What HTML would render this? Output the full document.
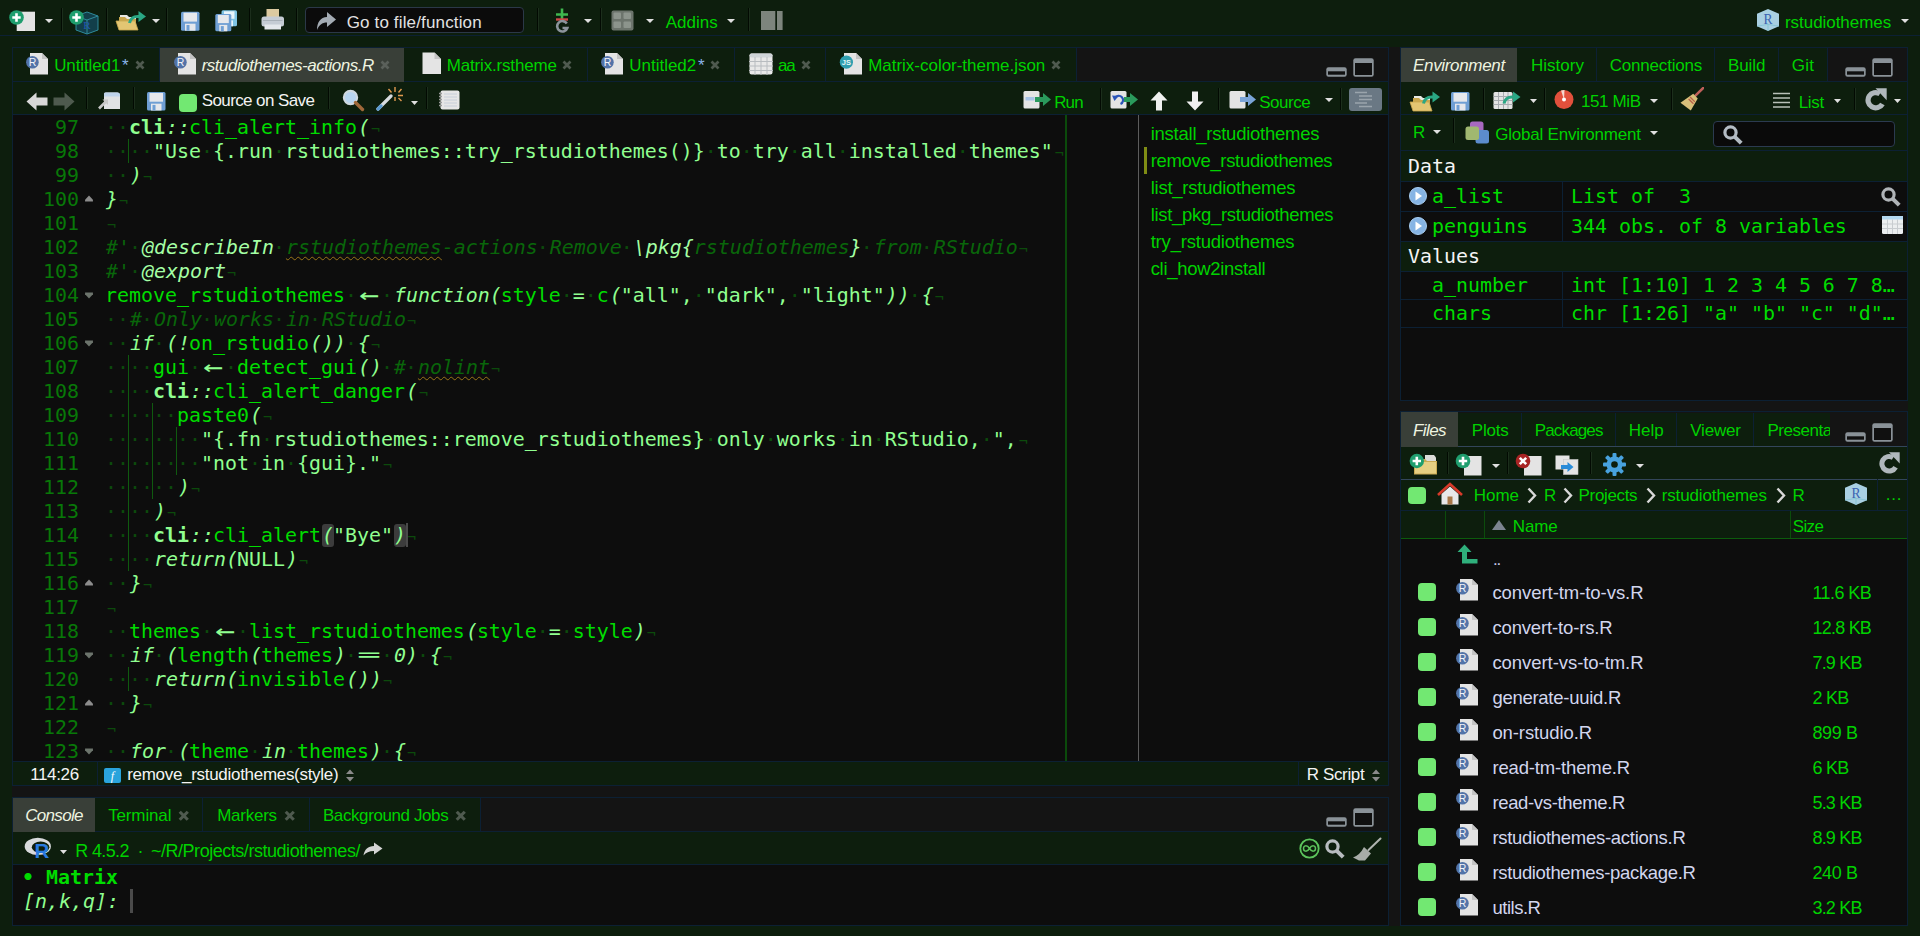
<!DOCTYPE html>
<html lang="en"><head><meta charset="utf-8"><title>RStudio</title>
<style>
html,body{margin:0;padding:0}
body{width:1920px;height:936px;background:#0d1e0d;overflow:hidden;position:relative;font-family:"Liberation Sans",sans-serif}
#r>div,#r>span,#r>svg,#code>*,.ab>*{position:absolute}
#r{position:absolute;left:0;top:0;width:1920px;height:936px;overflow:hidden}
#r div,#r span,#r svg{position:absolute}
.u{font-family:"Liberation Sans",sans-serif;line-height:20px;white-space:pre}
.cl,.ln{font-family:"DejaVu Sans Mono","Liberation Mono",monospace;font-size:19.93px;line-height:24px;height:24px;white-space:pre}
.cl{left:92px;padding-top:1px}
.ln{padding-top:1px}
.cl .e{font-size:15px;display:inline-block;width:12px;position:static;line-height:20px;vertical-align:top;margin-top:3px;position:relative;left:2px;top:1px}
.ln{left:0;width:66px;text-align:right;color:#087808}
.cl b,.cl i{font-weight:normal;font-style:normal}
.cl .w{color:#0c4a0c}
.cl .id{color:#00dc00}
.cl .k{color:#90ff90;font-style:italic;position:relative;left:1px}
.cl .s{color:#90ff90}
.cl .c{color:#09660a;font-style:italic;position:relative;left:1px}
.cl .t{color:#a4ffa4;font-style:italic;position:relative;left:1px}
.cl .n{color:#90ff90;font-weight:bold}
.cl .lig{display:inline-block;width:24px;height:24px;line-height:22px;vertical-align:top;text-align:center;position:static;font-size:24px;transform:scaleX(1.38)}
.cl .lig2{display:inline-block;width:24px;text-align:center;position:static;transform:scaleX(0.84)}
.cl .sq{text-decoration:underline wavy #9a7418 1px;text-underline-offset:2px}
.cl .hl{background:#3c3c3c;border-radius:3px}
</style></head>
<body><div id="r">
<div style="left:0px;top:35px;width:1920px;height:1px;background:#0c2034;"></div>
<svg style="left:8px;top:9px;" width="30" height="24" viewBox="0 0 30 24"><rect x="8.7" y="2.7" width="18.3" height="19.3" fill="#e4e4e4"/><circle cx="8.5" cy="8.5" r="7.3" fill="#1f9e6e"/><path d="M4.3 8.5H12.7M8.5 4.3V12.7" stroke="#fff" stroke-width="2.6"/></svg>
<svg style="left:45px;top:19px;" width="8" height="4" viewBox="0 0 8 4"><path d="M0 0H8L4.0 4Z" fill="#e0e0e0"/></svg>
<div style="left:61px;top:8px;width:1px;height:23px;background:#020a02;box-shadow:1px 0 0 #1c2e1c"></div>
<svg style="left:68px;top:9px;" width="32" height="26" viewBox="0 0 32 26"><path d="M19 3L30 7V21L19 25L8 21V7Z" fill="#123f4a" stroke="#2f8a9a" stroke-width="1"/><path d="M8 7L19 11L30 7M19 11V25" stroke="#2f8a9a" stroke-width="1" fill="none"/><text x="19" y="20" font-size="11" fill="#2458b0" text-anchor="middle" font-family="Liberation Serif, serif">R</text><circle cx="8.5" cy="8.5" r="7.3" fill="#1f9e6e"/><path d="M4.3 8.5H12.7M8.5 4.3V12.7" stroke="#fff" stroke-width="2.6"/></svg>
<div style="left:106px;top:8px;width:1px;height:23px;background:#020a02;box-shadow:1px 0 0 #1c2e1c"></div>
<svg style="left:114px;top:9px;" width="34" height="24" viewBox="0 0 34 24"><path d="M6 6h7l2 2h7v11h-16z" fill="#e9e9e4"/><path d="M5 8h6l2 2h9v10h-17z" fill="#c9a74e"/><path d="M2 12h19l3 9h-19z" fill="#e3c673" stroke="#c9a74e" stroke-width="0.8"/><path d="M15.5 14c1-5 5-7 10-6.5" fill="none" stroke="#2aa784" stroke-width="3"/><path d="M24.5 2l7.5 5.5l-7.5 5.5z" fill="#2aa784"/></svg>
<svg style="left:152px;top:19px;" width="8" height="4" viewBox="0 0 8 4"><path d="M0 0H8L4.0 4Z" fill="#e0e0e0"/></svg>
<div style="left:166px;top:8px;width:1px;height:23px;background:#020a02;box-shadow:1px 0 0 #1c2e1c"></div>
<svg style="left:180px;top:10px;" width="22" height="22" viewBox="0 0 22 22"><rect x="1" y="1.7" width="18.5" height="19" rx="1.5" fill="#6f9fd4"/><rect x="3.5" y="2.7" width="13.5" height="8.9" fill="#e6e8ec"/><rect x="5" y="13.7" width="10.5" height="7.0" fill="#e6e8ec"/><rect x="6.5" y="15.0" width="3" height="5.7" fill="#6f9fd4"/></svg>
<svg style="left:214px;top:9px;" width="26" height="24" viewBox="0 0 26 24"><rect x="7.5" y="1.3" width="15.5" height="16" rx="1.5" fill="#7fc4e4"/><rect x="10.0" y="2.3" width="10.5" height="7.5" fill="#e8f4fa"/><rect x="11.5" y="11.4" width="7.5" height="5.9" fill="#e8f4fa"/><rect x="13.0" y="12.5" width="3" height="4.8" fill="#7fc4e4"/><rect x="1.3" y="5" width="16" height="17.3" rx="1.5" fill="#6f9fd4"/><rect x="3.8" y="6" width="11" height="8.1" fill="#e6e8ec"/><rect x="5.3" y="15.9" width="8" height="6.4" fill="#e6e8ec"/><rect x="6.8" y="17.1" width="3" height="5.2" fill="#6f9fd4"/></svg>
<div style="left:249px;top:8px;width:1px;height:23px;background:#020a02;box-shadow:1px 0 0 #1c2e1c"></div>
<svg style="left:260px;top:8px;" width="26" height="23" viewBox="0 0 26 23"><rect x="6.5" y="1" width="12.5" height="10" fill="#dccaa0"/><rect x="1.5" y="8.5" width="22.5" height="10" rx="2.5" fill="#c5ccd4"/><rect x="4.5" y="16.5" width="16.5" height="5" fill="#e4e8ec"/><path d="M3 12.5H22.5" stroke="#a8b0b8" stroke-width="1"/></svg>
<div style="left:296px;top:8px;width:1px;height:23px;background:#020a02;box-shadow:1px 0 0 #1c2e1c"></div>
<div style="left:305px;top:7px;width:217px;height:24px;background:#0b0b0b;border:1px solid #2b3848;border-radius:4px"></div>
<svg style="left:316px;top:11px;" width="21" height="20" viewBox="0 0 21 20"><path d="M11 1L20 8.5L11 16V11.5C6 11.5 3 14 1 19C1 11 4.5 6.5 11 6Z" fill="#a4acb4"/></svg>
<span id="t1" class="u" style="left:346.7px;top:13.0px;color:#e2e2e2;font-size:17px;letter-spacing:0.147px;">Go to file/function</span>
<div style="left:537px;top:8px;width:1px;height:23px;background:#020a02;box-shadow:1px 0 0 #1c2e1c"></div>
<svg style="left:555px;top:8px;" width="14" height="25" viewBox="0 0 14 25"><path d="M1 6.5H13M7 0.5V12.5" stroke="#3fb84f" stroke-width="2.6"/><path d="M1 11.5H13" stroke="#d04848" stroke-width="2.4"/><path d="M11.8 15.5A5.2 5.2 0 1 0 12.3 20H7.5" stroke="#8c949c" stroke-width="2.6" fill="none"/></svg>
<svg style="left:584px;top:19px;" width="8" height="4" viewBox="0 0 8 4"><path d="M0 0H8L4.0 4Z" fill="#e0e0e0"/></svg>
<div style="left:600px;top:8px;width:1px;height:23px;background:#020a02;box-shadow:1px 0 0 #1c2e1c"></div>
<svg style="left:611px;top:10px;" width="23" height="21" viewBox="0 0 23 21"><rect x="0.5" y="0.5" width="22" height="20" rx="2" fill="#6c746c"/><rect x="2.5" y="2.5" width="7.5" height="6.5" rx="1" fill="#8c948c"/><rect x="12.5" y="2.5" width="7.5" height="6.5" rx="1" fill="#8c948c"/><rect x="2.5" y="11.5" width="7.5" height="6.5" rx="1" fill="#8c948c"/><rect x="12.5" y="11.5" width="7.5" height="6.5" rx="1" fill="#8c948c"/></svg>
<svg style="left:646px;top:19px;" width="8" height="4" viewBox="0 0 8 4"><path d="M0 0H8L4.0 4Z" fill="#e0e0e0"/></svg>
<span id="t2" class="u" style="left:665.7px;top:13.0px;color:#00d200;font-size:17px;letter-spacing:0.019px;">Addins</span>
<svg style="left:727px;top:19px;" width="8" height="4" viewBox="0 0 8 4"><path d="M0 0H8L4.0 4Z" fill="#e0e0e0"/></svg>
<div style="left:748px;top:8px;width:1px;height:23px;background:#020a02;box-shadow:1px 0 0 #1c2e1c"></div>
<svg style="left:761px;top:11px;" width="22" height="19" viewBox="0 0 22 19"><rect x="0" y="0" width="14.3" height="19" fill="#7d857d"/><rect x="16" y="0" width="5.6" height="19" fill="#7d857d"/></svg>
<svg style="left:1757px;top:9px;" width="22" height="22" viewBox="0 0 22 22"><path d="M11.0 0L22 4.84V17.16L11.0 22L0 17.16V4.84Z" fill="#a9d0e2"/><path d="M11.0 22V15.399999999999999M0 17.16L11.0 15.399999999999999L22 17.16" stroke="#7fc0d0" stroke-width="0.8" fill="none"/><text x="11.0" y="14.520000000000001" font-size="13.6" fill="#3a62b0" text-anchor="middle" font-family="Liberation Serif, serif">R</text></svg>
<span id="t3" class="u" style="left:1785.0px;top:13.0px;color:#00d200;font-size:17px;letter-spacing:-0.052px;">rstudiothemes</span>
<svg style="left:1901px;top:19px;" width="8" height="4" viewBox="0 0 8 4"><path d="M0 0H8L4.0 4Z" fill="#e0e0e0"/></svg>
<div style="left:12px;top:47px;width:1377px;height:739px;background:#0c2034;"></div>
<div style="left:13px;top:48px;width:1375px;height:33px;background:#141414;"></div>
<div style="left:13px;top:81px;width:1375px;height:1px;background:#0c2034;"></div>
<div style="left:13px;top:82px;width:1375px;height:32px;background:#0d1e0d;"></div>
<div style="left:13px;top:114px;width:1375px;height:1px;background:#0c2034;"></div>
<div style="left:13px;top:115px;width:1375px;height:646px;background:#0d0d0d;"></div>
<div style="left:13px;top:761px;width:1375px;height:1px;background:#0c2034;"></div>
<div style="left:13px;top:762px;width:1375px;height:23px;background:#0d1e0d;"></div>
<div style="left:13px;top:48px;width:147px;height:33px;background:#0d1e0d;box-shadow:inset -1px 0 0 #0c2034"></div>
<svg style="left:25px;top:52px;" width="24" height="24" viewBox="0 0 24 24"><path d="M5 1H17L23 7V22.5H5Z" fill="#e4e4e4"/><path d="M17 1V7H23Z" fill="#c4c4c4"/><circle cx="7.4" cy="10.2" r="6.3" fill="#5273a8"/><text x="7.5" y="13.9" font-size="10.5" fill="#f0f4fa" text-anchor="middle" font-family="Liberation Sans, sans-serif">R</text></svg>
<span id="t4" class="u" style="left:54.2px;top:56.0px;color:#00d200;font-size:17px;letter-spacing:-0.112px;">Untitled1</span>
<span id="t5" class="u" style="left:122px;top:56.0px;color:#8ab4e8;font-size:17px;">*</span>
<svg style="left:135px;top:60px;" width="10" height="10" viewBox="0 0 10 10"><path d="M1.5 1.5L8.5 8.5M8.5 1.5L1.5 8.5" stroke="#4f5a4f" stroke-width="2.7" stroke-linecap="butt"/></svg>
<div style="left:160px;top:48px;width:244px;height:34px;background:#393f38;"></div>
<svg style="left:173px;top:52px;" width="24" height="24" viewBox="0 0 24 24"><path d="M5 1H17L23 7V22.5H5Z" fill="#e4e4e4"/><path d="M17 1V7H23Z" fill="#c4c4c4"/><circle cx="7.4" cy="10.2" r="6.3" fill="#5273a8"/><text x="7.5" y="13.9" font-size="10.5" fill="#f0f4fa" text-anchor="middle" font-family="Liberation Sans, sans-serif">R</text></svg>
<span id="t6" class="u" style="left:201.7px;top:56.0px;color:#eef4e0;font-size:17px;font-style:italic;letter-spacing:-0.488px;">rstudiothemes-actions.R</span>
<svg style="left:380px;top:60px;" width="10" height="10" viewBox="0 0 10 10"><path d="M1.5 1.5L8.5 8.5M8.5 1.5L1.5 8.5" stroke="#5a605a" stroke-width="2.7" stroke-linecap="butt"/></svg>
<div style="left:404px;top:48px;width:184px;height:33px;background:#0d1e0d;box-shadow:inset -1px 0 0 #0c2034"></div>
<svg style="left:422px;top:52px;" width="20" height="23" viewBox="0 0 20 23"><path d="M0.5 0.5H12.5L19 7V22H0.5Z" fill="#e4e4e4"/><path d="M12.5 0.5V7H19Z" fill="#c4c4c4"/></svg>
<span id="t7" class="u" style="left:446.7px;top:56.0px;color:#00d200;font-size:17px;letter-spacing:-0.166px;">Matrix.rstheme</span>
<svg style="left:562px;top:60px;" width="10" height="10" viewBox="0 0 10 10"><path d="M1.5 1.5L8.5 8.5M8.5 1.5L1.5 8.5" stroke="#4f5a4f" stroke-width="2.7" stroke-linecap="butt"/></svg>
<div style="left:588px;top:48px;width:147px;height:33px;background:#0d1e0d;box-shadow:inset -1px 0 0 #0c2034"></div>
<svg style="left:600px;top:52px;" width="24" height="24" viewBox="0 0 24 24"><path d="M5 1H17L23 7V22.5H5Z" fill="#e4e4e4"/><path d="M17 1V7H23Z" fill="#c4c4c4"/><circle cx="7.4" cy="10.2" r="6.3" fill="#5273a8"/><text x="7.5" y="13.9" font-size="10.5" fill="#f0f4fa" text-anchor="middle" font-family="Liberation Sans, sans-serif">R</text></svg>
<span id="t8" class="u" style="left:629.2px;top:56.0px;color:#00d200;font-size:17px;letter-spacing:-0.001px;">Untitled2</span>
<span id="t9" class="u" style="left:698px;top:56.0px;color:#8ab4e8;font-size:17px;">*</span>
<svg style="left:710px;top:60px;" width="10" height="10" viewBox="0 0 10 10"><path d="M1.5 1.5L8.5 8.5M8.5 1.5L1.5 8.5" stroke="#4f5a4f" stroke-width="2.7" stroke-linecap="butt"/></svg>
<div style="left:735px;top:48px;width:91px;height:33px;background:#0d1e0d;box-shadow:inset -1px 0 0 #0c2034"></div>
<svg style="left:749px;top:52.5px;" width="24" height="22" viewBox="0 0 24 22"><rect x="0.5" y="0.5" width="23" height="21" rx="2" fill="#e8e8e8"/><rect x="0.5" y="0.5" width="23" height="4" rx="2" fill="#cfd4d8"/><path d="M6.0 4V22" stroke="#b8bcc0" stroke-width="1"/><path d="M12.0 4V22" stroke="#b8bcc0" stroke-width="1"/><path d="M18.0 4V22" stroke="#b8bcc0" stroke-width="1"/><path d="M0 8.5H24" stroke="#b8bcc0" stroke-width="1"/><path d="M0 13.0H24" stroke="#b8bcc0" stroke-width="1"/><path d="M0 17.5H24" stroke="#b8bcc0" stroke-width="1"/></svg>
<span id="t10" class="u" style="left:778px;top:56.0px;color:#00d200;font-size:17px;letter-spacing:-1.211px;">aa</span>
<svg style="left:801px;top:60px;" width="10" height="10" viewBox="0 0 10 10"><path d="M1.5 1.5L8.5 8.5M8.5 1.5L1.5 8.5" stroke="#4f5a4f" stroke-width="2.7" stroke-linecap="butt"/></svg>
<div style="left:826px;top:48px;width:251px;height:33px;background:#0d1e0d;box-shadow:inset -1px 0 0 #0c2034"></div>
<svg style="left:839px;top:52px;" width="24" height="24" viewBox="0 0 24 24"><path d="M5 1H17L23 7V22.5H5Z" fill="#e4e4e4"/><path d="M17 1V7H23Z" fill="#c4c4c4"/><circle cx="7.4" cy="10.2" r="6.6" fill="#2f9fb0"/><text x="7.4" y="13.2" font-size="7.5" font-weight="bold" fill="#e8f8f8" text-anchor="middle" font-family="Liberation Sans, sans-serif">JS</text></svg>
<span id="t11" class="u" style="left:868.2px;top:56.0px;color:#00d200;font-size:17px;letter-spacing:-0.022px;">Matrix-color-theme.json</span>
<svg style="left:1051px;top:60px;" width="10" height="10" viewBox="0 0 10 10"><path d="M1.5 1.5L8.5 8.5M8.5 1.5L1.5 8.5" stroke="#4f5a4f" stroke-width="2.7" stroke-linecap="butt"/></svg>
<svg style="left:1326px;top:66.5px;" width="21" height="10" viewBox="0 0 21 10"><rect x="0.3" y="0.3" width="20.4" height="9.4" rx="2.2" fill="#8a9298"/><rect x="2" y="4.3" width="17" height="3.4" fill="#101010"/></svg>
<svg style="left:1353px;top:57.5px;" width="21" height="19" viewBox="0 0 21 19"><rect x="0.3" y="0.3" width="20.4" height="18.4" rx="2.2" fill="#8a9298"/><rect x="2" y="5" width="17" height="12" fill="#101010"/></svg>
<svg style="left:26px;top:92px;" width="22" height="19" viewBox="0 0 22 19"><path d="M0.5 9.5L10.5 0.5V5.5H21.5V13.5H10.5V18.5Z" fill="#d8d8d8"/></svg>
<svg style="left:53px;top:92px;" width="22" height="19" viewBox="0 0 22 19"><path d="M21.5 9.5L11.5 0.5V5.5H0.5V13.5H11.5V18.5Z" fill="#4e5a4e"/></svg>
<div style="left:86px;top:87px;width:1px;height:22px;background:#020a02;box-shadow:1px 0 0 #1c2e1c"></div>
<svg style="left:98px;top:92px;" width="23" height="18" viewBox="0 0 23 18"><path d="M8 0.5H19Q22 0.5 22 3.5V17H6V2.5Q6 0.5 8 0.5Z" fill="#e0e2e4"/><path d="M7 0.5H20Q22 0.5 22 3V4.5H6V2Q6 0.5 7 0.5Z" fill="#bfd4ec"/><path d="M1 16.5L8.5 9" stroke="#c8c8c8" stroke-width="2.6"/><path d="M4.5 7.5H10V13Z" fill="#c8c8c8"/></svg>
<div style="left:133px;top:87px;width:1px;height:22px;background:#020a02;box-shadow:1px 0 0 #1c2e1c"></div>
<svg style="left:146px;top:91px;" width="21" height="21" viewBox="0 0 21 21"><rect x="1" y="1" width="18.5" height="18.5" rx="1.5" fill="#6f9fd4"/><rect x="3.5" y="2" width="13.5" height="8.7" fill="#e6e8ec"/><rect x="5" y="12.7" width="10.5" height="6.8" fill="#e6e8ec"/><rect x="6.5" y="13.9" width="3" height="5.5" fill="#6f9fd4"/></svg>
<div style="left:179px;top:93.5px;width:18px;height:18px;background:#72e872;border-radius:4px"></div>
<span id="t12" class="u" style="left:201.7px;top:91.0px;color:#f4f4f4;font-size:17px;letter-spacing:-0.598px;">Source on Save</span>
<div style="left:328px;top:87px;width:1px;height:22px;background:#020a02;box-shadow:1px 0 0 #1c2e1c"></div>
<svg style="left:342px;top:89px;" width="23" height="23" viewBox="0 0 23 23"><circle cx="8.5" cy="8.5" r="6.6" fill="#b8d4f0" stroke="#d0d8e0" stroke-width="2.2"/><path d="M13.5 13.5L20.5 20.5" stroke="#a0683a" stroke-width="3.4" stroke-linecap="round"/></svg>
<svg style="left:376px;top:86px;" width="28" height="26" viewBox="0 0 28 26"><path d="M2 23L15 10" stroke="#d8dce0" stroke-width="3.2" stroke-linecap="round"/><path d="M2 23L5 20" stroke="#5a9ad0" stroke-width="3.2" stroke-linecap="round"/><path d="M19 1V6M19 11V15M12.5 3L15.5 6.5M25.5 3L22.5 6.5M22 9.5H27M22.5 12L25.5 15" stroke="#e09a50" stroke-width="1.4"/></svg>
<svg style="left:411px;top:101px;" width="7" height="4" viewBox="0 0 7 4"><path d="M0 0H7L3.5 4Z" fill="#e0e0e0"/></svg>
<div style="left:426px;top:87px;width:1px;height:22px;background:#020a02;box-shadow:1px 0 0 #1c2e1c"></div>
<svg style="left:438px;top:90px;" width="23" height="20" viewBox="0 0 23 20"><rect x="2.5" y="0.5" width="19" height="19" rx="2" fill="#e6e6e6"/><path d="M6 4H19M6 7H19M6 10H19M6 13H19M6 16H19" stroke="#c4ccd8" stroke-width="0.9"/><path d="M1 3.5H4M1 6.5H4M1 9.5H4M1 12.5H4M1 15.5H4" stroke="#9a9a9a" stroke-width="1.4"/></svg>
<svg style="left:1023px;top:90px;" width="30" height="20" viewBox="0 0 30 20"><rect x="0.5" y="1" width="16" height="17.5" rx="1.5" fill="#e4e4e4"/><rect x="2.5" y="7" width="9" height="3.5" fill="#a8c4e8"/><path d="M12 7H20V3L28 9.5L20 16V12H12Z" fill="#2a9a5c"/></svg>
<span id="t13" class="u" style="left:1054.2px;top:92.5px;color:#00d200;font-size:17px;letter-spacing:-0.862px;">Run</span>
<div style="left:1100px;top:88px;width:1px;height:22px;background:#020a02;box-shadow:1px 0 0 #1c2e1c"></div>
<svg style="left:1110px;top:90px;" width="30" height="20" viewBox="0 0 30 20"><rect x="0.5" y="1" width="16" height="17.5" rx="1.5" fill="#e4e4e4"/><path d="M10.5 14A4.3 4.3 0 1 0 5 8" stroke="#2a55b8" stroke-width="2.2" fill="none"/><path d="M2 5.5L8.5 6L4.5 11Z" fill="#2a55b8"/><path d="M14 7H20V3L28 9.5L20 16V12H14Z" fill="#2a9a5c"/></svg>
<svg style="left:1150px;top:91px;" width="18" height="20" viewBox="0 0 18 20"><path d="M9 0.5L17.5 9.5H12V19.5H6V9.5H0.5Z" fill="#f0f0f0"/></svg>
<svg style="left:1186px;top:91px;" width="18" height="20" viewBox="0 0 18 20"><path d="M9 19.5L17.5 10.5H12V0.5H6V10.5H0.5Z" fill="#f0f0f0"/></svg>
<div style="left:1218px;top:88px;width:1px;height:22px;background:#020a02;box-shadow:1px 0 0 #1c2e1c"></div>
<svg style="left:1229px;top:90px;" width="30" height="20" viewBox="0 0 30 20"><rect x="0.5" y="1" width="16" height="17.5" rx="1.5" fill="#e4e4e4"/><path d="M11 7H19V3L27 9.5L19 16V12H11Z" fill="#7aa4d8"/></svg>
<span id="t14" class="u" style="left:1259.2px;top:92.5px;color:#00d200;font-size:17px;letter-spacing:-0.462px;">Source</span>
<svg style="left:1325px;top:98px;" width="8" height="4" viewBox="0 0 8 4"><path d="M0 0H8L4.0 4Z" fill="#e0e0e0"/></svg>
<div style="left:1340px;top:88px;width:1px;height:22px;background:#020a02;box-shadow:1px 0 0 #1c2e1c"></div>
<svg style="left:1349px;top:88px;" width="33" height="23" viewBox="0 0 33 23"><rect x="0" y="0" width="33" height="23" rx="3" fill="#6a7884"/><path d="M6 4.5H18M10 8H23M10 11.5H23M6 15H18M10 18.5H23" stroke="#9aa4ac" stroke-width="1.6"/></svg>
<span id="t15" class="u" style="left:30.2px;top:765.0px;color:#f4f4f4;font-size:17px;letter-spacing:-0.356px;">114:26</span>
<div style="left:97px;top:762px;width:1px;height:23px;background:#0c2034;"></div>
<svg style="left:104px;top:768px;" width="17" height="15" viewBox="0 0 17 15"><rect width="17" height="15" rx="2" fill="#2aa4dc"/><text x="8.5" y="12" font-size="12" font-style="italic" fill="#fff" text-anchor="middle" font-family="Liberation Serif, serif">f</text></svg>
<span id="t16" class="u" style="left:127.2px;top:765.0px;color:#f4f4f4;font-size:17px;letter-spacing:-0.300px;">remove_rstudiothemes(style)</span>
<svg style="left:346px;top:769px;" width="8" height="13" viewBox="0 0 8 13"><path d="M0 5L4 0.5L8 5ZM0 8L4 12.5L8 8Z" fill="#8a8a8a"/></svg>
<div style="left:1298px;top:762px;width:1px;height:23px;background:#0c2034;"></div>
<span id="t17" class="u" style="left:1306.7px;top:765.0px;color:#f4f4f4;font-size:17px;letter-spacing:-0.359px;">R Script</span>
<svg style="left:1372px;top:769px;" width="8" height="13" viewBox="0 0 8 13"><path d="M0 5L4 0.5L8 5ZM0 8L4 12.5L8 8Z" fill="#8a8a8a"/></svg>
<div style="left:1065px;top:115px;width:2px;height:646px;background:#0b4a0b;"></div>
<div style="left:1138px;top:115px;width:1px;height:646px;background:#5c5c5c;"></div>
<span id="t18" class="u" style="left:1150.7px;top:123.7px;color:#00d200;font-size:18.5px;letter-spacing:-0.247px;">install_rstudiothemes</span>
<span id="t19" class="u" style="left:1150.7px;top:150.7px;color:#00d200;font-size:18.5px;letter-spacing:-0.329px;">remove_rstudiothemes</span>
<span id="t20" class="u" style="left:1150.7px;top:177.7px;color:#00d200;font-size:18.5px;letter-spacing:-0.250px;">list_rstudiothemes</span>
<span id="t21" class="u" style="left:1150.7px;top:204.7px;color:#00d200;font-size:18.5px;letter-spacing:-0.301px;">list_pkg_rstudiothemes</span>
<span id="t22" class="u" style="left:1150.7px;top:231.7px;color:#00d200;font-size:18.5px;letter-spacing:-0.203px;">try_rstudiothemes</span>
<span id="t23" class="u" style="left:1150.7px;top:258.6px;color:#00d200;font-size:18.5px;letter-spacing:-0.313px;">cli_how2install</span>
<div style="left:1144px;top:147px;width:3px;height:27px;background:#7f8c14;"></div>
<div id="code" style="left:13px;top:115px;width:1053px;height:646px;overflow:hidden">
<span class="ln" style="top:0px">97</span>
<span class="cl" style="top:0px"><i class="w">··</i><b class="n">cli</b><i class="k">::</i><b class="id">cli_alert_info</b><i class="k">(</i><i class="w e">¬</i></span>
<span class="ln" style="top:24px">98</span>
<div style="left:115px;top:24px;width:1px;height:24px;background:#0f5a0f"></div>
<span class="cl" style="top:24px"><i class="w">····</i><b class="s">"Use</b><i class="w">·</i><b class="s">{.run</b><i class="w">·</i><b class="s">rstudiothemes::try_rstudiothemes()}</b><i class="w">·</i><b class="s">to</b><i class="w">·</i><b class="s">try</b><i class="w">·</i><b class="s">all</b><i class="w">·</i><b class="s">installed</b><i class="w">·</i><b class="s">themes"</b><i class="w e">¬</i></span>
<span class="ln" style="top:48px">99</span>
<span class="cl" style="top:48px"><i class="w">··</i><i class="k">)</i><i class="w e">¬</i></span>
<span class="ln" style="top:72px">100</span>
<svg style="left:72px;top:80px" width="8" height="7" viewBox="0 0 9 8"><path d="M0 5.5L4.5 0.5L9 5.5V7.5H0Z" fill="#8c8c8c"/></svg>
<span class="cl" style="top:72px"><i class="k">}</i><i class="w e">¬</i></span>
<span class="ln" style="top:96px">101</span>
<span class="cl" style="top:96px"><i class="w e">¬</i></span>
<span class="ln" style="top:120px">102</span>
<span class="cl" style="top:120px"><i class="c">#'</i><i class="w">·</i><i class="t">@describeIn</i><i class="w">·</i><i class="c sq">rstudiothemes</i><i class="c">-actions</i><i class="w">·</i><i class="c">Remove</i><i class="w">·</i><i class="t">\pkg{</i><i class="c">rstudiothemes</i><i class="t">}</i><i class="w">·</i><i class="c">from</i><i class="w">·</i><i class="c">RStudio</i><i class="w e">¬</i></span>
<span class="ln" style="top:144px">103</span>
<span class="cl" style="top:144px"><i class="c">#'</i><i class="w">·</i><i class="t">@export</i><i class="w e">¬</i></span>
<span class="ln" style="top:168px">104</span>
<svg style="left:72px;top:177px" width="8" height="7" viewBox="0 0 9 8"><path d="M0 2.5L4.5 7.5L9 2.5V0.5H0Z" fill="#6c746c"/></svg>
<span class="cl" style="top:168px"><b class="id">remove_rstudiothemes</b><i class="w">·</i><b class="s lig">←</b><i class="w">·</i><i class="k">function(</i><b class="id">style</b><i class="w">·</i><b class="s">=</b><i class="w">·</i><b class="id">c</b><i class="k">(</i><b class="s">"all",</b><i class="w">·</i><b class="s">"dark",</b><i class="w">·</i><b class="s">"light"</b><i class="k">))</i><i class="w">·</i><i class="k">{</i><i class="w e">¬</i></span>
<span class="ln" style="top:192px">105</span>
<span class="cl" style="top:192px"><i class="w">··</i><i class="c">#</i><i class="w">·</i><i class="c">Only</i><i class="w">·</i><i class="c">works</i><i class="w">·</i><i class="c">in</i><i class="w">·</i><i class="c">RStudio</i><i class="w e">¬</i></span>
<span class="ln" style="top:216px">106</span>
<svg style="left:72px;top:225px" width="8" height="7" viewBox="0 0 9 8"><path d="M0 2.5L4.5 7.5L9 2.5V0.5H0Z" fill="#6c746c"/></svg>
<span class="cl" style="top:216px"><i class="w">··</i><i class="k">if</i><i class="w">·</i><i class="k">(!</i><b class="id">on_rstudio</b><i class="k">())</i><i class="w">·</i><i class="k">{</i><i class="w e">¬</i></span>
<span class="ln" style="top:240px">107</span>
<div style="left:115px;top:240px;width:1px;height:24px;background:#0f5a0f"></div>
<span class="cl" style="top:240px"><i class="w">····</i><b class="id">gui</b><i class="w">·</i><b class="s lig">←</b><i class="w">·</i><b class="id">detect_gui</b><i class="k">()</i><i class="w">·</i><i class="c">#</i><i class="w">·</i><i class="c sq">nolint</i><i class="w e">¬</i></span>
<span class="ln" style="top:264px">108</span>
<div style="left:115px;top:264px;width:1px;height:24px;background:#0f5a0f"></div>
<span class="cl" style="top:264px"><i class="w">····</i><b class="n">cli</b><i class="k">::</i><b class="id">cli_alert_danger</b><i class="k">(</i><i class="w e">¬</i></span>
<span class="ln" style="top:288px">109</span>
<div style="left:115px;top:288px;width:1px;height:24px;background:#0f5a0f"></div>
<div style="left:139px;top:288px;width:1px;height:24px;background:#0f5a0f"></div>
<span class="cl" style="top:288px"><i class="w">······</i><b class="id">paste0</b><i class="k">(</i><i class="w e">¬</i></span>
<span class="ln" style="top:312px">110</span>
<div style="left:115px;top:312px;width:1px;height:24px;background:#0f5a0f"></div>
<div style="left:139px;top:312px;width:1px;height:24px;background:#0f5a0f"></div>
<div style="left:163px;top:312px;width:1px;height:24px;background:#0f5a0f"></div>
<span class="cl" style="top:312px"><i class="w">········</i><b class="s">"{.fn</b><i class="w">·</i><b class="s">rstudiothemes::remove_rstudiothemes}</b><i class="w">·</i><b class="s">only</b><i class="w">·</i><b class="s">works</b><i class="w">·</i><b class="s">in</b><i class="w">·</i><b class="s">RStudio,</b><i class="w">·</i><b class="s">",</b><i class="w e">¬</i></span>
<span class="ln" style="top:336px">111</span>
<div style="left:115px;top:336px;width:1px;height:24px;background:#0f5a0f"></div>
<div style="left:139px;top:336px;width:1px;height:24px;background:#0f5a0f"></div>
<div style="left:163px;top:336px;width:1px;height:24px;background:#0f5a0f"></div>
<span class="cl" style="top:336px"><i class="w">········</i><b class="s">"not</b><i class="w">·</i><b class="s">in</b><i class="w">·</i><b class="s">{gui}."</b><i class="w e">¬</i></span>
<span class="ln" style="top:360px">112</span>
<div style="left:115px;top:360px;width:1px;height:24px;background:#0f5a0f"></div>
<div style="left:139px;top:360px;width:1px;height:24px;background:#0f5a0f"></div>
<span class="cl" style="top:360px"><i class="w">······</i><i class="k">)</i><i class="w e">¬</i></span>
<span class="ln" style="top:384px">113</span>
<div style="left:115px;top:384px;width:1px;height:24px;background:#0f5a0f"></div>
<span class="cl" style="top:384px"><i class="w">····</i><i class="k">)</i><i class="w e">¬</i></span>
<span class="ln" style="top:408px">114</span>
<div style="left:115px;top:408px;width:1px;height:24px;background:#0f5a0f"></div>
<span class="cl" style="top:408px"><i class="w">····</i><b class="n">cli</b><i class="k">::</i><b class="id">cli_alert</b><i class="k hl">(</i><b class="s">"Bye"</b><i class="k hl">)</i><i class="w e">¬</i></span>
<span class="ln" style="top:432px">115</span>
<div style="left:115px;top:432px;width:1px;height:24px;background:#0f5a0f"></div>
<span class="cl" style="top:432px"><i class="w">····</i><i class="k">return(</i><b class="s">NULL</b><i class="k">)</i><i class="w e">¬</i></span>
<span class="ln" style="top:456px">116</span>
<svg style="left:72px;top:464px" width="8" height="7" viewBox="0 0 9 8"><path d="M0 5.5L4.5 0.5L9 5.5V7.5H0Z" fill="#8c8c8c"/></svg>
<span class="cl" style="top:456px"><i class="w">··</i><i class="k">}</i><i class="w e">¬</i></span>
<span class="ln" style="top:480px">117</span>
<span class="cl" style="top:480px"><i class="w e">¬</i></span>
<span class="ln" style="top:504px">118</span>
<span class="cl" style="top:504px"><i class="w">··</i><b class="id">themes</b><i class="w">·</i><b class="s lig">←</b><i class="w">·</i><b class="id">list_rstudiothemes</b><i class="k">(</i><b class="id">style</b><i class="w">·</i><b class="s">=</b><i class="w">·</i><b class="id">style</b><i class="k">)</i><i class="w e">¬</i></span>
<span class="ln" style="top:528px">119</span>
<svg style="left:72px;top:537px" width="8" height="7" viewBox="0 0 9 8"><path d="M0 2.5L4.5 7.5L9 2.5V0.5H0Z" fill="#6c746c"/></svg>
<span class="cl" style="top:528px"><i class="w">··</i><i class="k">if</i><i class="w">·</i><i class="k">(</i><b class="id">length</b><i class="k">(</i><b class="id">themes</b><i class="k">)</i><i class="w">·</i><b class="s lig2">══</b><i class="w">·</i><i class="k">0)</i><i class="w">·</i><i class="k">{</i><i class="w e">¬</i></span>
<span class="ln" style="top:552px">120</span>
<div style="left:115px;top:552px;width:1px;height:24px;background:#0f5a0f"></div>
<span class="cl" style="top:552px"><i class="w">····</i><i class="k">return(</i><b class="id">invisible</b><i class="k">())</i><i class="w e">¬</i></span>
<span class="ln" style="top:576px">121</span>
<svg style="left:72px;top:584px" width="8" height="7" viewBox="0 0 9 8"><path d="M0 5.5L4.5 0.5L9 5.5V7.5H0Z" fill="#8c8c8c"/></svg>
<span class="cl" style="top:576px"><i class="w">··</i><i class="k">}</i><i class="w e">¬</i></span>
<span class="ln" style="top:600px">122</span>
<span class="cl" style="top:600px"><i class="w e">¬</i></span>
<span class="ln" style="top:624px">123</span>
<svg style="left:72px;top:633px" width="8" height="7" viewBox="0 0 9 8"><path d="M0 2.5L4.5 7.5L9 2.5V0.5H0Z" fill="#6c746c"/></svg>
<span class="cl" style="top:624px"><i class="w">··</i><i class="k">for</i><i class="w">·</i><i class="k">(</i><b class="id">theme</b><i class="w">·</i><i class="k">in</i><i class="w">·</i><b class="id">themes</b><i class="k">)</i><i class="w">·</i><i class="k">{</i><i class="w e">¬</i></span>
<div style="left:393px;top:408px;width:2px;height:24px;background:#4a4a4a"></div>
</div>
<div style="left:12px;top:797px;width:1377px;height:129px;background:#0c2034;"></div>
<div style="left:13px;top:798px;width:1375px;height:33px;background:#141414;"></div>
<div style="left:13px;top:831px;width:1375px;height:1px;background:#0c2034;"></div>
<div style="left:13px;top:832px;width:1375px;height:32px;background:#0d1e0d;"></div>
<div style="left:13px;top:864px;width:1375px;height:1px;background:#0c2034;"></div>
<div style="left:13px;top:865px;width:1375px;height:60px;background:#0d0d0d;"></div>
<div style="left:13px;top:798px;width:82px;height:34px;background:#393f38;"></div>
<span id="t24" class="u" style="left:25.2px;top:806.0px;color:#eef4e0;font-size:17px;font-style:italic;letter-spacing:-0.682px;">Console</span>
<div style="left:95px;top:798px;width:108px;height:33px;background:#0d1e0d;box-shadow:inset -1px 0 0 #0c2034"></div>
<span id="t25" class="u" style="left:108.2px;top:806.0px;color:#00d200;font-size:17px;letter-spacing:-0.144px;">Terminal</span>
<svg style="left:178px;top:810px;" width="11.5" height="11.5" viewBox="0 0 10 10"><path d="M1.5 1.5L8.5 8.5M8.5 1.5L1.5 8.5" stroke="#4f5a4f" stroke-width="2.7" stroke-linecap="butt"/></svg>
<div style="left:203px;top:798px;width:107px;height:33px;background:#0d1e0d;box-shadow:inset -1px 0 0 #0c2034"></div>
<span id="t26" class="u" style="left:217.2px;top:806.0px;color:#00d200;font-size:17px;letter-spacing:-0.258px;">Markers</span>
<svg style="left:284px;top:810px;" width="11.5" height="11.5" viewBox="0 0 10 10"><path d="M1.5 1.5L8.5 8.5M8.5 1.5L1.5 8.5" stroke="#4f5a4f" stroke-width="2.7" stroke-linecap="butt"/></svg>
<div style="left:310px;top:798px;width:171px;height:33px;background:#0d1e0d;box-shadow:inset -1px 0 0 #0c2034"></div>
<span id="t27" class="u" style="left:322.9px;top:806.0px;color:#00d200;font-size:17px;letter-spacing:-0.398px;">Background Jobs</span>
<svg style="left:454.5px;top:810px;" width="11.5" height="11.5" viewBox="0 0 10 10"><path d="M1.5 1.5L8.5 8.5M8.5 1.5L1.5 8.5" stroke="#4f5a4f" stroke-width="2.7" stroke-linecap="butt"/></svg>
<svg style="left:1326px;top:816.5px;" width="21" height="10" viewBox="0 0 21 10"><rect x="0.3" y="0.3" width="20.4" height="9.4" rx="2.2" fill="#8a9298"/><rect x="2" y="4.3" width="17" height="3.4" fill="#101010"/></svg>
<svg style="left:1353px;top:807.5px;" width="21" height="19" viewBox="0 0 21 19"><rect x="0.3" y="0.3" width="20.4" height="18.4" rx="2.2" fill="#8a9298"/><rect x="2" y="5" width="17" height="12" fill="#101010"/></svg>
<svg style="left:24px;top:836px;" width="30" height="24" viewBox="0 0 30 24"><ellipse cx="13.8" cy="10.4" rx="13.1" ry="8.6" fill="#d8dadc"/><ellipse cx="16.6" cy="11.2" rx="8.8" ry="5.6" fill="#0d1e0d"/><text x="10.6" y="21.8" font-size="20.5" font-weight="bold" fill="#2a7be0" font-family="Liberation Sans, sans-serif">R</text></svg>
<svg style="left:60px;top:850px;" width="7" height="4" viewBox="0 0 7 4"><path d="M0 0H7L3.5 4Z" fill="#e0e0e0"/></svg>
<span id="t28" class="u" style="left:75.2px;top:841.1px;color:#00d200;font-size:18px;letter-spacing:-0.635px;">R 4.5.2</span>
<span id="t29" class="u" style="left:137.5px;top:841.1px;color:#00d200;font-size:18px;">·</span>
<span id="t30" class="u" style="left:150.89999999999998px;top:841.1px;color:#00d200;font-size:18px;letter-spacing:-0.463px;">~/R/Projects/rstudiothemes/</span>
<svg style="left:363px;top:842px;" width="20" height="14" viewBox="0 0 20 14"><path d="M11 0.5L19.5 6.5L11 12.5V9C6 9 3 10.5 0.5 13.5C1.5 7.5 5 4 11 4Z" fill="#d4d4d4"/></svg>
<svg style="left:1299px;top:838px;" width="21" height="21" viewBox="0 0 21 21"><circle cx="10.5" cy="10.5" r="9.2" fill="none" stroke="#5cc45c" stroke-width="1.8"/><path d="M10.5 10.5C8 6.5 4.5 7.5 4.5 10.5S8 14.5 10.5 10.5S16.5 7.5 16.5 10.5S13 14.5 10.5 10.5Z" fill="none" stroke="#5cc45c" stroke-width="1.5"/></svg>
<svg style="left:1325px;top:839px;" width="20" height="20" viewBox="0 0 20 20"><circle cx="7.5" cy="7.5" r="5.6" fill="none" stroke="#b8bcc0" stroke-width="3.2"/><path d="M11.8 11.8L18.2 18.2" stroke="#b8bcc0" stroke-width="4.0" stroke-linecap="butt"/></svg>
<svg style="left:1352px;top:837px;" width="30" height="24" viewBox="0 0 30 24"><path d="M16.5 13L28.5 1.5" stroke="#b0b4b0" stroke-width="2" stroke-linecap="round"/><path d="M12 10L19 16.5L13 23.5H7L1 20.5Q8 18 12 10Z" fill="#a8aca8"/></svg>
<span class="cl" style="left:22px;top:865px"><b class="id" style="font-weight:bold">• Matrix</b></span>
<span class="cl" style="left:22px;top:889px"><i class="k">[n,k,q]:</i></span>
<div style="left:130px;top:889px;width:3px;height:24px;background:#4a4a4a;"></div>
<div style="left:1389px;top:47px;width:11px;height:879px;background:#141414;"></div>
<div style="left:1400px;top:401px;width:508px;height:10px;background:#141414;"></div>
<div style="left:12px;top:786px;width:1377px;height:11px;background:#141414;"></div>
<div style="left:1400px;top:47px;width:508px;height:354px;background:#0c2034;"></div>
<div style="left:1401px;top:48px;width:506px;height:33px;background:#141414;"></div>
<div style="left:1401px;top:81px;width:506px;height:1px;background:#0c2034;"></div>
<div style="left:1401px;top:82px;width:506px;height:32px;background:#0d1e0d;"></div>
<div style="left:1401px;top:114px;width:506px;height:1px;background:#0c2034;"></div>
<div style="left:1401px;top:115px;width:506px;height:35px;background:#0d1e0d;"></div>
<div style="left:1401px;top:150px;width:506px;height:1px;background:#0c2034;"></div>
<div style="left:1401px;top:151px;width:506px;height:249px;background:#0d0d0d;"></div>
<div style="left:1401px;top:48px;width:116px;height:34px;background:#393f38;"></div>
<span id="t31" class="u" style="left:1413.0px;top:56.0px;color:#eef4e0;font-size:17px;font-style:italic;letter-spacing:-0.331px;">Environment</span>
<div style="left:1517px;top:48px;width:80px;height:33px;background:#0d1e0d;box-shadow:inset -1px 0 0 #0c2034"></div>
<span id="t32" class="u" style="left:1530.9px;top:56.0px;color:#00d200;font-size:17px;letter-spacing:0.042px;">History</span>
<div style="left:1597px;top:48px;width:118px;height:33px;background:#0d1e0d;box-shadow:inset -1px 0 0 #0c2034"></div>
<span id="t33" class="u" style="left:1609.7px;top:56.0px;color:#00d200;font-size:17px;letter-spacing:-0.192px;">Connections</span>
<div style="left:1715px;top:48px;width:64px;height:33px;background:#0d1e0d;box-shadow:inset -1px 0 0 #0c2034"></div>
<span id="t34" class="u" style="left:1727.9px;top:56.0px;color:#00d200;font-size:17px;letter-spacing:-0.042px;">Build</span>
<div style="left:1779px;top:48px;width:49px;height:33px;background:#0d1e0d;box-shadow:inset -1px 0 0 #0c2034"></div>
<span id="t35" class="u" style="left:1791.8px;top:56.0px;color:#00d200;font-size:17px;letter-spacing:0.189px;">Git</span>
<svg style="left:1845px;top:66.5px;" width="21" height="10" viewBox="0 0 21 10"><rect x="0.3" y="0.3" width="20.4" height="9.4" rx="2.2" fill="#8a9298"/><rect x="2" y="4.3" width="17" height="3.4" fill="#101010"/></svg>
<svg style="left:1872px;top:57.5px;" width="21" height="19" viewBox="0 0 21 19"><rect x="0.3" y="0.3" width="20.4" height="18.4" rx="2.2" fill="#8a9298"/><rect x="2" y="5" width="17" height="12" fill="#101010"/></svg>
<svg style="left:1409px;top:88px;" width="34" height="24" viewBox="0 0 34 24"><path d="M5 8h7l2 2h7v11h-16z" fill="#e9e9e4"/><path d="M4 10h6l2 2h9v10h-17z" fill="#c9a74e"/><path d="M1 14h19l3 9h-19z" fill="#e3c673" stroke="#c9a74e" stroke-width="0.8"/><path d="M14.5 15.5c1-5 5-7 10-6.5" fill="none" stroke="#2aa784" stroke-width="3"/><path d="M23.5 3.5l7.5 5.5l-7.5 5.5z" fill="#2aa784"/></svg>
<svg style="left:1450px;top:91px;" width="21" height="21" viewBox="0 0 21 21"><rect x="1" y="1" width="18.5" height="18.5" rx="1.5" fill="#6f9fd4"/><rect x="3.5" y="2" width="13.5" height="8.7" fill="#e6e8ec"/><rect x="5" y="12.7" width="10.5" height="6.8" fill="#e6e8ec"/><rect x="6.5" y="13.9" width="3" height="5.5" fill="#6f9fd4"/></svg>
<div style="left:1483px;top:88px;width:1px;height:22px;background:#020a02;box-shadow:1px 0 0 #1c2e1c"></div>
<svg style="left:1493px;top:90px;" width="30" height="20" viewBox="0 0 30 20"><rect x="0.5" y="2" width="19" height="17" rx="1.5" fill="#e4e4e4"/><path d="M0.5 6.5H19.5M0.5 10.5H19.5M0.5 14.5H19.5M5.5 2V19M10.5 2V19M15 2V19" stroke="#a8acb0" stroke-width="1"/><path d="M11 13.5c1-5 5-7 10-6.5" fill="none" stroke="#2aa784" stroke-width="3"/><path d="M20 1.5l7.5 5.5l-7.5 5.5z" fill="#2aa784"/></svg>
<svg style="left:1530px;top:99px;" width="7" height="4" viewBox="0 0 7 4"><path d="M0 0H7L3.5 4Z" fill="#e0e0e0"/></svg>
<div style="left:1544px;top:88px;width:1px;height:22px;background:#020a02;box-shadow:1px 0 0 #1c2e1c"></div>
<svg style="left:1554px;top:89px;" width="20" height="21" viewBox="0 0 20 21"><circle cx="10" cy="10.5" r="9.5" fill="#e2503c"/><path d="M10 10.5L7 1.5A9.5 9.5 0 0 1 10.5 1Z" fill="#f4d8d0"/><circle cx="10" cy="10.5" r="2" fill="#fff"/></svg>
<span id="t36" class="u" style="left:1580.9px;top:92.0px;color:#00d200;font-size:17px;letter-spacing:-0.354px;">151 MiB</span>
<svg style="left:1650px;top:99px;" width="8" height="4" viewBox="0 0 8 4"><path d="M0 0H8L4.0 4Z" fill="#e0e0e0"/></svg>
<div style="left:1671px;top:88px;width:1px;height:22px;background:#020a02;box-shadow:1px 0 0 #1c2e1c"></div>
<svg style="left:1680px;top:87px;" width="24" height="24" viewBox="0 0 24 24"><path d="M14.879999999999999 9.120000000000001L23.52 0.72" stroke="#c0605a" stroke-width="2.6" stroke-linecap="round"/><path d="M13.200000000000001 6.720000000000001L17.759999999999998 11.52L10.8 23.52L0.48 15.84Z" fill="#d8bf7a"/><path d="M10.08 10.08L14.879999999999999 14.879999999999999" stroke="#b8604a" stroke-width="1.3"/><path d="M8.64 12.0L13.440000000000001 16.799999999999997" stroke="#b8604a" stroke-width="1.3"/></svg>
<svg style="left:1773px;top:92px;" width="18" height="17" viewBox="0 0 18 17"><path d="M0 1.5H17M0 6H17M0 10.5H17M0 15H17" stroke="#b8c0b8" stroke-width="1.6"/></svg>
<span id="t37" class="u" style="left:1798.7px;top:92.5px;color:#00d200;font-size:17px;letter-spacing:-0.342px;">List</span>
<svg style="left:1834px;top:99px;" width="7" height="4" viewBox="0 0 7 4"><path d="M0 0H7L3.5 4Z" fill="#e0e0e0"/></svg>
<div style="left:1854px;top:88px;width:1px;height:22px;background:#020a02;box-shadow:1px 0 0 #1c2e1c"></div>
<svg style="left:1864px;top:88px;" width="23" height="23" viewBox="0 0 23 23"><path d="M18.400000000000002 15.890909090909089A7.631818181818181 7.631818181818181 0 1 1 15.890909090909089 5.854545454545454" fill="none" stroke="#b0b8bc" stroke-width="5.227272727272727"/><path d="M11.5 0.3136363636363636H22.686363636363634V12.127272727272727Z" fill="#b0b8bc"/></svg>
<svg style="left:1894px;top:99px;" width="7" height="4" viewBox="0 0 7 4"><path d="M0 0H7L3.5 4Z" fill="#e0e0e0"/></svg>
<span id="t38" class="u" style="left:1413px;top:123.0px;color:#00d200;font-size:17px;letter-spacing:-2.781px;">R</span>
<svg style="left:1432.5px;top:130px;" width="8" height="4" viewBox="0 0 8 4"><path d="M0 0H8L4.0 4Z" fill="#e0e0e0"/></svg>
<div style="left:1453px;top:118px;width:1px;height:25px;background:#020a02;box-shadow:1px 0 0 #1c2e1c"></div>
<svg style="left:1465px;top:121px;" width="25" height="23" viewBox="0 0 25 23"><rect x="5" y="0.5" width="13.5" height="13.5" rx="2.5" fill="#a868c0"/><rect x="10.5" y="9" width="13.5" height="13.5" rx="2.5" fill="#5c8ccc"/><rect x="0.5" y="5.5" width="13.5" height="13.5" rx="2.5" fill="#a0b870"/></svg>
<span id="t39" class="u" style="left:1495.2px;top:125.0px;color:#00d200;font-size:17px;letter-spacing:-0.206px;">Global Environment</span>
<svg style="left:1650px;top:131px;" width="8" height="4" viewBox="0 0 8 4"><path d="M0 0H8L4.0 4Z" fill="#e0e0e0"/></svg>
<div style="left:1713px;top:121px;width:180px;height:24px;background:#0a0a0a;border:1px solid #2b3a50;border-radius:4px"></div>
<svg style="left:1723px;top:124.5px;" width="20" height="20" viewBox="0 0 20 20"><circle cx="7.5" cy="7.5" r="5.6" fill="none" stroke="#b4bcc4" stroke-width="3.2"/><path d="M11.8 11.8L18.2 18.2" stroke="#b4bcc4" stroke-width="4.0" stroke-linecap="butt"/></svg>
<div style="left:1401px;top:151px;width:506px;height:30px;background:#0d1e0d;"></div>
<span class="cl" style="left:1408px;top:154px;color:#f4f4f4">Data</span>
<div style="left:1401px;top:181px;width:506px;height:1px;background:#0c2034;"></div>
<div style="left:1401px;top:182px;width:506px;height:29px;background:#0d0d0d;"></div>
<div style="left:1562px;top:182px;width:1px;height:29px;background:#0c2034;"></div>
<span class="cl" style="left:1432px;top:184px;color:#00dc00">a_list</span>
<span class="cl" style="left:1571px;top:184px;color:#00dc00">List of  3</span>
<svg style="left:1408.5px;top:186.5px;" width="18" height="18" viewBox="0 0 18 18"><circle cx="9" cy="9" r="8.5" fill="#86b4e4"/><circle cx="9" cy="9" r="8.5" fill="none" stroke="#a8cdf0" stroke-width="1"/><path d="M6.5 4.5L13 9L6.5 13.5Z" fill="#fff"/></svg>
<div style="left:1401px;top:211px;width:506px;height:1px;background:#0c2034;"></div>
<div style="left:1401px;top:212px;width:506px;height:29px;background:#0d0d0d;"></div>
<div style="left:1562px;top:212px;width:1px;height:29px;background:#0c2034;"></div>
<span class="cl" style="left:1432px;top:214px;color:#00dc00">penguins</span>
<span class="cl" style="left:1571px;top:214px;color:#00dc00">344 obs. of 8 variables</span>
<svg style="left:1408.5px;top:216.5px;" width="18" height="18" viewBox="0 0 18 18"><circle cx="9" cy="9" r="8.5" fill="#86b4e4"/><circle cx="9" cy="9" r="8.5" fill="none" stroke="#a8cdf0" stroke-width="1"/><path d="M6.5 4.5L13 9L6.5 13.5Z" fill="#fff"/></svg>
<div style="left:1401px;top:241px;width:506px;height:1px;background:#0c2034;"></div>
<div style="left:1401px;top:242px;width:506px;height:29px;background:#0d1e0d;"></div>
<span class="cl" style="left:1408px;top:244px;color:#f4f4f4">Values</span>
<div style="left:1401px;top:271px;width:506px;height:1px;background:#0c2034;"></div>
<div style="left:1401px;top:272px;width:506px;height:27px;background:#0d0d0d;"></div>
<div style="left:1562px;top:272px;width:1px;height:27px;background:#0c2034;"></div>
<span class="cl" style="left:1432px;top:273px;color:#00dc00">a_number</span>
<span class="cl" style="left:1571px;top:273px;color:#00dc00">int [1:10] 1 2 3 4 5 6 7 8…</span>
<div style="left:1401px;top:299px;width:506px;height:1px;background:#0c2034;"></div>
<div style="left:1401px;top:300px;width:506px;height:27px;background:#0d0d0d;"></div>
<div style="left:1562px;top:300px;width:1px;height:27px;background:#0c2034;"></div>
<span class="cl" style="left:1432px;top:301px;color:#00dc00">chars</span>
<span class="cl" style="left:1571px;top:301px;color:#00dc00">chr [1:26] "a" "b" "c" "d"…</span>
<div style="left:1401px;top:327px;width:506px;height:1px;background:#0c2034;"></div>
<svg style="left:1881px;top:186.5px;" width="20" height="20" viewBox="0 0 20 20"><circle cx="7.5" cy="7.5" r="5.6" fill="none" stroke="#b0b4b8" stroke-width="3.2"/><path d="M11.8 11.8L18.2 18.2" stroke="#b0b4b8" stroke-width="4.0" stroke-linecap="butt"/></svg>
<svg style="left:1882px;top:216px;" width="21" height="18" viewBox="0 0 21 18"><rect x="0" y="0" width="21" height="18" rx="1.5" fill="#eceef0"/><rect x="0" y="0" width="21" height="3.5" fill="#b4d8f0"/><path d="M0 8H21M0 12.5H21M5.5 3.5V18M10.5 3.5V18M15.5 3.5V18" stroke="#c8ccd0" stroke-width="1"/></svg>
<div style="left:1400px;top:411px;width:508px;height:515px;background:#0c2034;"></div>
<div style="left:1401px;top:412px;width:506px;height:34px;background:#141414;"></div>
<div style="left:1401px;top:446px;width:506px;height:1px;background:#33465a;"></div>
<div style="left:1401px;top:447px;width:506px;height:32px;background:#0d1e0d;"></div>
<div style="left:1401px;top:479px;width:506px;height:1px;background:#33465a;"></div>
<div style="left:1401px;top:480px;width:506px;height:30px;background:#0d1e0d;"></div>
<div style="left:1401px;top:510px;width:506px;height:1px;background:#0c2034;"></div>
<div style="left:1401px;top:511px;width:506px;height:27px;background:#0d1e0d;"></div>
<div style="left:1401px;top:538px;width:506px;height:1px;background:#0c5c0c;"></div>
<div style="left:1401px;top:539px;width:506px;height:386px;background:#0d0d0d;"></div>
<div style="left:1401px;top:412px;width:57px;height:35px;background:#393f38;"></div>
<span id="t40" class="u" style="left:1413.0px;top:421.0px;color:#eef4e0;font-size:17px;font-style:italic;letter-spacing:-0.581px;">Files</span>
<div style="left:1458px;top:413px;width:64px;height:33px;background:#0d1e0d;box-shadow:inset -1px 0 0 #0c2034"></div>
<span id="t41" class="u" style="left:1471.8px;top:421.0px;color:#00d200;font-size:17px;letter-spacing:-0.239px;">Plots</span>
<div style="left:1522px;top:413px;width:94px;height:33px;background:#0d1e0d;box-shadow:inset -1px 0 0 #0c2034"></div>
<span id="t42" class="u" style="left:1534.8px;top:421.0px;color:#00d200;font-size:17px;letter-spacing:-0.859px;">Packages</span>
<div style="left:1616px;top:413px;width:61px;height:33px;background:#0d1e0d;box-shadow:inset -1px 0 0 #0c2034"></div>
<span id="t43" class="u" style="left:1628.8px;top:421.0px;color:#00d200;font-size:17px;letter-spacing:0.008px;">Help</span>
<div style="left:1677px;top:413px;width:77px;height:33px;background:#0d1e0d;box-shadow:inset -1px 0 0 #0c2034"></div>
<span id="t44" class="u" style="left:1690.2px;top:421.0px;color:#00d200;font-size:17px;letter-spacing:-0.176px;">Viewer</span>
<div style="left:1754px;top:413px;width:76px;height:33px;background:#0d1e0d;"></div>
<div style="left:1754px;top:413px;width:75.5px;height:33px;overflow:hidden">
<span id="t45" class="u" style="left:13.5px;top:8.0px;color:#00d200;font-size:17px;letter-spacing:-0.488px;">Presentation</span>
</div>
<svg style="left:1845px;top:432.0px;" width="21" height="10" viewBox="0 0 21 10"><rect x="0.3" y="0.3" width="20.4" height="9.4" rx="2.2" fill="#8a9298"/><rect x="2" y="4.3" width="17" height="3.4" fill="#101010"/></svg>
<svg style="left:1872px;top:423.0px;" width="21" height="19" viewBox="0 0 21 19"><rect x="0.3" y="0.3" width="20.4" height="18.4" rx="2.2" fill="#8a9298"/><rect x="2" y="5" width="17" height="12" fill="#101010"/></svg>
<svg style="left:1409px;top:453px;" width="30" height="23" viewBox="0 0 30 23"><path d="M16 2H25L27 4.5V20H16Z" fill="#dcdcd8"/><path d="M5 6H16L18 8H28V21.5H5Z" fill="#c9aa52"/><path d="M6 9H27V20.5H6Z" fill="#e6cf82"/><circle cx="7.8" cy="8" r="7.2" fill="#1f9e6e"/><path d="M3.5999999999999996 8H12.0M7.8 3.8V12.2" stroke="#fff" stroke-width="2.6"/></svg>
<div style="left:1447px;top:452px;width:1px;height:22px;background:#020a02;box-shadow:1px 0 0 #1c2e1c"></div>
<svg style="left:1455px;top:453px;" width="28" height="23" viewBox="0 0 28 23"><rect x="9" y="3" width="17.5" height="19.5" fill="#e4e4e4"/><circle cx="8" cy="8" r="7.3" fill="#1f9e6e"/><path d="M3.8 8H12.2M8 3.8V12.2" stroke="#fff" stroke-width="2.6"/></svg>
<svg style="left:1492px;top:464px;" width="8" height="4" viewBox="0 0 8 4"><path d="M0 0H8L4.0 4Z" fill="#e0e0e0"/></svg>
<div style="left:1507px;top:452px;width:1px;height:22px;background:#020a02;box-shadow:1px 0 0 #1c2e1c"></div>
<svg style="left:1515px;top:453px;" width="28" height="23" viewBox="0 0 28 23"><rect x="9" y="3" width="17.5" height="19.5" fill="#e4e4e4"/><circle cx="8" cy="8" r="7.3" fill="#a82424"/><path d="M4.8 4.8L11.2 11.2M11.2 4.8L4.8 11.2" stroke="#fff" stroke-width="2.6"/></svg>
<svg style="left:1555px;top:455px;" width="24" height="20" viewBox="0 0 24 20"><rect x="0.5" y="0.5" width="14" height="14" fill="#e4e4e4"/><rect x="8.5" y="4.5" width="14.5" height="15" fill="#e4e4e4" stroke="#c8c8c8" stroke-width="0.6"/><path d="M6 10H12.5V7L18.5 12L12.5 17V14H6Z" fill="#2a8cd8"/></svg>
<div style="left:1590px;top:452px;width:1px;height:22px;background:#020a02;box-shadow:1px 0 0 #1c2e1c"></div>
<svg style="left:1602.5px;top:452.5px;" width="23" height="23" viewBox="0 0 23 23"><rect x="9.5" y="0" width="4" height="23" rx="1" fill="#48a2de" transform="rotate(0 11.5 11.5)"/><rect x="9.5" y="0" width="4" height="23" rx="1" fill="#48a2de" transform="rotate(45 11.5 11.5)"/><rect x="9.5" y="0" width="4" height="23" rx="1" fill="#48a2de" transform="rotate(90 11.5 11.5)"/><rect x="9.5" y="0" width="4" height="23" rx="1" fill="#48a2de" transform="rotate(135 11.5 11.5)"/><circle cx="11.5" cy="11.5" r="8" fill="#48a2de"/><circle cx="11.5" cy="11.5" r="3.3" fill="#0d1e0d"/></svg>
<svg style="left:1636px;top:464px;" width="8" height="4" viewBox="0 0 8 4"><path d="M0 0H8L4.0 4Z" fill="#e0e0e0"/></svg>
<svg style="left:1878px;top:452px;" width="22" height="22" viewBox="0 0 22 22"><path d="M17.6 15.2A7.3 7.3 0 1 1 15.2 5.6" fill="none" stroke="#b0b8bc" stroke-width="5.0"/><path d="M11.0 0.3H21.7V11.6Z" fill="#b0b8bc"/></svg>
<div style="left:1408px;top:486.5px;width:17.5px;height:17.5px;background:#72e872;border-radius:4px"></div>
<svg style="left:1437px;top:482px;" width="26" height="24" viewBox="0 0 26 24"><path d="M4.5 12V22.5H21.5V12L13 4.5Z" fill="#e8e8e8"/><path d="M1 13L13 2L25 13" stroke="#d83a2a" stroke-width="2.6" fill="none"/><rect x="10.5" y="14.5" width="5" height="8" fill="#a87848"/></svg>
<span id="t46" class="u" style="left:1473.7px;top:486.0px;color:#00d200;font-size:17px;letter-spacing:0.010px;">Home</span>
<svg style="left:1527px;top:486.5px;" width="10" height="17" viewBox="0 0 10 17"><path d="M1.5 1.5L8 8.5L1.5 15.5" stroke="#d8d8d8" stroke-width="2.4" fill="none"/></svg>
<span id="t47" class="u" style="left:1544px;top:486.0px;color:#00d200;font-size:17px;letter-spacing:-2.481px;">R</span>
<svg style="left:1563px;top:486.5px;" width="10" height="17" viewBox="0 0 10 17"><path d="M1.5 1.5L8 8.5L1.5 15.5" stroke="#d8d8d8" stroke-width="2.4" fill="none"/></svg>
<span id="t48" class="u" style="left:1578.6000000000001px;top:486.0px;color:#00d200;font-size:17px;letter-spacing:-0.353px;">Projects</span>
<svg style="left:1646px;top:486.5px;" width="10" height="17" viewBox="0 0 10 17"><path d="M1.5 1.5L8 8.5L1.5 15.5" stroke="#d8d8d8" stroke-width="2.4" fill="none"/></svg>
<span id="t49" class="u" style="left:1661.7px;top:486.0px;color:#00d200;font-size:17px;letter-spacing:-0.129px;">rstudiothemes</span>
<svg style="left:1776px;top:486.5px;" width="10" height="17" viewBox="0 0 10 17"><path d="M1.5 1.5L8 8.5L1.5 15.5" stroke="#d8d8d8" stroke-width="2.4" fill="none"/></svg>
<span id="t50" class="u" style="left:1792.5px;top:486.0px;color:#00d200;font-size:17px;letter-spacing:-2.781px;">R</span>
<svg style="left:1845px;top:483px;" width="22" height="22" viewBox="0 0 22 22"><path d="M11.0 0L22 4.84V17.16L11.0 22L0 17.16V4.84Z" fill="#a9d0e2"/><path d="M11.0 22V15.399999999999999M0 17.16L11.0 15.399999999999999L22 17.16" stroke="#7fc0d0" stroke-width="0.8" fill="none"/><text x="11.0" y="14.520000000000001" font-size="13.6" fill="#3a62b0" text-anchor="middle" font-family="Liberation Serif, serif">R</text></svg>
<div style="left:1877px;top:479px;width:1px;height:31px;background:#0c2034;"></div>
<span id="t51" class="u" style="left:1885.7px;top:485.0px;color:#00d200;font-size:17px;letter-spacing:0.809px;">...</span>
<div style="left:1445px;top:511px;width:1px;height:27px;background:#0c4c0c;"></div>
<div style="left:1484px;top:511px;width:1px;height:27px;background:#0c4c0c;"></div>
<div style="left:1790px;top:511px;width:1px;height:27px;background:#0c4c0c;"></div>
<svg style="left:1492px;top:519.5px;" width="14" height="10" viewBox="0 0 14 10"><path d="M0 10L7 0L14 10Z" fill="#7c8490"/></svg>
<span id="t52" class="u" style="left:1512.8px;top:517.0px;color:#00d200;font-size:17px;letter-spacing:-0.140px;">Name</span>
<span id="t53" class="u" style="left:1792.7px;top:517.0px;color:#00d200;font-size:17px;letter-spacing:-0.620px;">Size</span>
<svg style="left:1457px;top:544px;" width="21" height="20" viewBox="0 0 21 20"><path d="M7.5 0.5L14.5 8H10V15H20.5V19.5H5V8H0.5Z" fill="#2fb07c"/></svg>
<span id="t54" class="u" style="left:1493px;top:550.0px;color:#c8c8e8;font-size:17px;letter-spacing:-1.227px;">..</span>
<div style="left:1418px;top:583px;width:18px;height:18px;background:#72e872;border-radius:4px"></div>
<svg style="left:1454.5px;top:578px;" width="24" height="24" viewBox="0 0 24 24"><path d="M5 1H17L23 7V22.5H5Z" fill="#e4e4e4"/><path d="M17 1V7H23Z" fill="#c4c4c4"/><circle cx="7.4" cy="10.2" r="6.3" fill="#5273a8"/><text x="7.5" y="13.9" font-size="10.5" fill="#f0f4fa" text-anchor="middle" font-family="Liberation Sans, sans-serif">R</text></svg>
<span id="t55" class="u" style="left:1492.4px;top:582.6px;color:#d2d6ee;font-size:18.5px;letter-spacing:-0.058px;">convert-tm-to-vs.R</span>
<span id="t56" class="u" style="left:1812.5px;top:583.1px;color:#00d200;font-size:18px;letter-spacing:-0.588px;">11.6 KB</span>
<div style="left:1418px;top:618px;width:18px;height:18px;background:#72e872;border-radius:4px"></div>
<svg style="left:1454.5px;top:613px;" width="24" height="24" viewBox="0 0 24 24"><path d="M5 1H17L23 7V22.5H5Z" fill="#e4e4e4"/><path d="M17 1V7H23Z" fill="#c4c4c4"/><circle cx="7.4" cy="10.2" r="6.3" fill="#5273a8"/><text x="7.5" y="13.9" font-size="10.5" fill="#f0f4fa" text-anchor="middle" font-family="Liberation Sans, sans-serif">R</text></svg>
<span id="t57" class="u" style="left:1492.4px;top:617.6px;color:#d2d6ee;font-size:18.5px;letter-spacing:-0.149px;">convert-to-rs.R</span>
<span id="t58" class="u" style="left:1812.5px;top:618.1px;color:#00d200;font-size:18px;letter-spacing:-0.778px;">12.8 KB</span>
<div style="left:1418px;top:653px;width:18px;height:18px;background:#72e872;border-radius:4px"></div>
<svg style="left:1454.5px;top:648px;" width="24" height="24" viewBox="0 0 24 24"><path d="M5 1H17L23 7V22.5H5Z" fill="#e4e4e4"/><path d="M17 1V7H23Z" fill="#c4c4c4"/><circle cx="7.4" cy="10.2" r="6.3" fill="#5273a8"/><text x="7.5" y="13.9" font-size="10.5" fill="#f0f4fa" text-anchor="middle" font-family="Liberation Sans, sans-serif">R</text></svg>
<span id="t59" class="u" style="left:1492.4px;top:652.6px;color:#d2d6ee;font-size:18.5px;letter-spacing:-0.058px;">convert-vs-to-tm.R</span>
<span id="t60" class="u" style="left:1812.5px;top:653.1px;color:#00d200;font-size:18px;letter-spacing:-0.824px;">7.9 KB</span>
<div style="left:1418px;top:688px;width:18px;height:18px;background:#72e872;border-radius:4px"></div>
<svg style="left:1454.5px;top:683px;" width="24" height="24" viewBox="0 0 24 24"><path d="M5 1H17L23 7V22.5H5Z" fill="#e4e4e4"/><path d="M17 1V7H23Z" fill="#c4c4c4"/><circle cx="7.4" cy="10.2" r="6.3" fill="#5273a8"/><text x="7.5" y="13.9" font-size="10.5" fill="#f0f4fa" text-anchor="middle" font-family="Liberation Sans, sans-serif">R</text></svg>
<span id="t61" class="u" style="left:1492.4px;top:687.6px;color:#d2d6ee;font-size:18.5px;letter-spacing:-0.271px;">generate-uuid.R</span>
<span id="t62" class="u" style="left:1812.5px;top:688.1px;color:#00d200;font-size:18px;letter-spacing:-0.733px;">2 KB</span>
<div style="left:1418px;top:723px;width:18px;height:18px;background:#72e872;border-radius:4px"></div>
<svg style="left:1454.5px;top:718px;" width="24" height="24" viewBox="0 0 24 24"><path d="M5 1H17L23 7V22.5H5Z" fill="#e4e4e4"/><path d="M17 1V7H23Z" fill="#c4c4c4"/><circle cx="7.4" cy="10.2" r="6.3" fill="#5273a8"/><text x="7.5" y="13.9" font-size="10.5" fill="#f0f4fa" text-anchor="middle" font-family="Liberation Sans, sans-serif">R</text></svg>
<span id="t63" class="u" style="left:1492.4px;top:722.6px;color:#d2d6ee;font-size:18.5px;letter-spacing:-0.097px;">on-rstudio.R</span>
<span id="t64" class="u" style="left:1812.5px;top:723.1px;color:#00d200;font-size:18px;letter-spacing:-0.389px;">899 B</span>
<div style="left:1418px;top:758px;width:18px;height:18px;background:#72e872;border-radius:4px"></div>
<svg style="left:1454.5px;top:753px;" width="24" height="24" viewBox="0 0 24 24"><path d="M5 1H17L23 7V22.5H5Z" fill="#e4e4e4"/><path d="M17 1V7H23Z" fill="#c4c4c4"/><circle cx="7.4" cy="10.2" r="6.3" fill="#5273a8"/><text x="7.5" y="13.9" font-size="10.5" fill="#f0f4fa" text-anchor="middle" font-family="Liberation Sans, sans-serif">R</text></svg>
<span id="t65" class="u" style="left:1492.4px;top:757.6px;color:#d2d6ee;font-size:18.5px;letter-spacing:-0.149px;">read-tm-theme.R</span>
<span id="t66" class="u" style="left:1812.5px;top:758.1px;color:#00d200;font-size:18px;letter-spacing:-0.733px;">6 KB</span>
<div style="left:1418px;top:793px;width:18px;height:18px;background:#72e872;border-radius:4px"></div>
<svg style="left:1454.5px;top:788px;" width="24" height="24" viewBox="0 0 24 24"><path d="M5 1H17L23 7V22.5H5Z" fill="#e4e4e4"/><path d="M17 1V7H23Z" fill="#c4c4c4"/><circle cx="7.4" cy="10.2" r="6.3" fill="#5273a8"/><text x="7.5" y="13.9" font-size="10.5" fill="#f0f4fa" text-anchor="middle" font-family="Liberation Sans, sans-serif">R</text></svg>
<span id="t67" class="u" style="left:1492.4px;top:792.6px;color:#d2d6ee;font-size:18.5px;letter-spacing:-0.344px;">read-vs-theme.R</span>
<span id="t68" class="u" style="left:1812.5px;top:793.1px;color:#00d200;font-size:18px;letter-spacing:-0.824px;">5.3 KB</span>
<div style="left:1418px;top:828px;width:18px;height:18px;background:#72e872;border-radius:4px"></div>
<svg style="left:1454.5px;top:823px;" width="24" height="24" viewBox="0 0 24 24"><path d="M5 1H17L23 7V22.5H5Z" fill="#e4e4e4"/><path d="M17 1V7H23Z" fill="#c4c4c4"/><circle cx="7.4" cy="10.2" r="6.3" fill="#5273a8"/><text x="7.5" y="13.9" font-size="10.5" fill="#f0f4fa" text-anchor="middle" font-family="Liberation Sans, sans-serif">R</text></svg>
<span id="t69" class="u" style="left:1492.4px;top:827.6px;color:#d2d6ee;font-size:18.5px;letter-spacing:-0.278px;">rstudiothemes-actions.R</span>
<span id="t70" class="u" style="left:1812.5px;top:828.1px;color:#00d200;font-size:18px;letter-spacing:-0.824px;">8.9 KB</span>
<div style="left:1418px;top:863px;width:18px;height:18px;background:#72e872;border-radius:4px"></div>
<svg style="left:1454.5px;top:858px;" width="24" height="24" viewBox="0 0 24 24"><path d="M5 1H17L23 7V22.5H5Z" fill="#e4e4e4"/><path d="M17 1V7H23Z" fill="#c4c4c4"/><circle cx="7.4" cy="10.2" r="6.3" fill="#5273a8"/><text x="7.5" y="13.9" font-size="10.5" fill="#f0f4fa" text-anchor="middle" font-family="Liberation Sans, sans-serif">R</text></svg>
<span id="t71" class="u" style="left:1492.4px;top:862.6px;color:#d2d6ee;font-size:18.5px;letter-spacing:-0.335px;">rstudiothemes-package.R</span>
<span id="t72" class="u" style="left:1812.5px;top:863.1px;color:#00d200;font-size:18px;letter-spacing:-0.389px;">240 B</span>
<div style="left:1418px;top:898px;width:18px;height:18px;background:#72e872;border-radius:4px"></div>
<svg style="left:1454.5px;top:893px;" width="24" height="24" viewBox="0 0 24 24"><path d="M5 1H17L23 7V22.5H5Z" fill="#e4e4e4"/><path d="M17 1V7H23Z" fill="#c4c4c4"/><circle cx="7.4" cy="10.2" r="6.3" fill="#5273a8"/><text x="7.5" y="13.9" font-size="10.5" fill="#f0f4fa" text-anchor="middle" font-family="Liberation Sans, sans-serif">R</text></svg>
<span id="t73" class="u" style="left:1492.4px;top:897.6px;color:#d2d6ee;font-size:18.5px;letter-spacing:-0.472px;">utils.R</span>
<span id="t74" class="u" style="left:1812.5px;top:898.1px;color:#00d200;font-size:18px;letter-spacing:-0.824px;">3.2 KB</span>
</div></body></html>
